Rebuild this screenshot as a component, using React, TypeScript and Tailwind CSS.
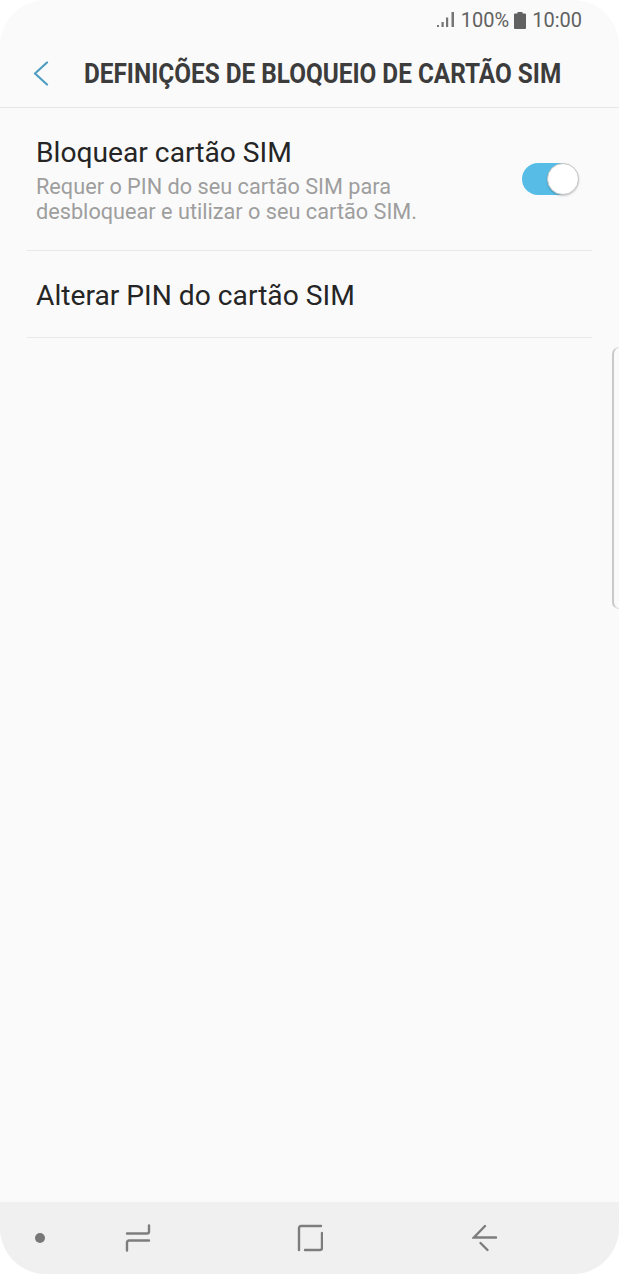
function SignalIcon() {
  return (
    <svg width="19" height="16" viewBox="0 0 19 16" fill="#757575">
      <rect x="0" y="13" width="2" height="2" />
      <rect x="4.500" y="10" width="2.200" height="5" />
      <rect x="9" y="5.500" width="2.200" height="9.500" />
      <rect x="14.500" y="0" width="2.500" height="15" />
    </svg>
  )
}

function BatteryIcon() {
  return (
    <svg width="12" height="17" viewBox="0 0 12 17" fill="#616161">
      <path d="M3.500 0h5v1.500H11a1 1 0 0 1 1 1V16a1 1 0 0 1-1 1H1a1 1 0 0 1-1-1V2.500a1 1 0 0 1 1-1h2.500z" />
    </svg>
  )
}

function BackChevron() {
  return (
    <svg width="16" height="25" viewBox="0 0 16 25" fill="none" stroke="#4f9dc0" strokeWidth="2.200" strokeLinecap="round" strokeLinejoin="round">
      <path d="M14 1.500L2 12.500l12 11" />
    </svg>
  )
}

function RecentsIcon() {
  return (
    <svg width="26" height="28" viewBox="0 0 26 28" fill="none" stroke="#7d7d7d" strokeWidth="2.400" strokeLinecap="round">
      <path d="M24 1.500v6a2 2 0 0 1-2 2H2" />
      <path d="M24 16.500H4a2 2 0 0 0-2 2v8" />
    </svg>
  )
}

function HomeIcon() {
  return (
    <svg width="26" height="28" viewBox="0 0 26 28" fill="none" stroke="#7d7d7d" strokeWidth="2.400" strokeLinecap="round">
      <path d="M2 26V4a2 2 0 0 1 2-2h20" />
      <path d="M8 26h15a2 2 0 0 0 2-2V9" />
    </svg>
  )
}

function BackIcon() {
  return (
    <svg width="26" height="28" viewBox="0 0 26 28" fill="none" stroke="#7d7d7d" strokeWidth="2.400" strokeLinecap="round">
      <path d="M13 2L2 13.500h22" />
      <path d="M8.500 19l7 7" />
    </svg>
  )
}

export default function App() {
  return (
    <div className="w-[619px] h-[1274px] bg-white overflow-hidden" style={{ fontFamily: 'Roboto, sans-serif' }}>
      <div className="relative w-full h-full bg-[#fafafa] rounded-[46px] overflow-hidden flex flex-col">
        {/* Status bar */}
        <div className="h-[40px] flex items-center justify-end gap-[5px] pr-[37px] text-[#616161] text-[20px]">
          <SignalIcon />
          <span>100%</span>
          <BatteryIcon />
          <span className="ml-[1px]">10:00</span>
        </div>

        {/* Header */}
        <div className="h-[68px] flex items-center border-b border-[#e6e6e6]">
          <div className="ml-[33px] flex"><BackChevron /></div>
          <h1 className="ml-[35px] whitespace-nowrap origin-left scale-x-[0.869] text-[28px] font-bold text-[#3c3c3c]">
            DEFINIÇÕES DE BLOQUEIO DE CARTÃO SIM
          </h1>
        </div>

        {/* Settings list */}
        <div className="px-[27px]">
          <div className="h-[143px] flex items-center justify-between border-b border-[#e8e8e8] pl-[9px] pr-[13px]">
            <div className="pt-[2px]">
              <p className="text-[28.200px] leading-[34px] text-[#252525]">Bloquear cartão SIM</p>
              <p className="text-[21.700px] leading-[25px] mt-[4px] text-[#9e9e9e]">
                Requer o PIN do seu cartão SIM para
                <br />
                desbloquear e utilizar o seu cartão SIM.
              </p>
            </div>
            <div className="relative w-[57px] h-[32px] -mt-[1px]">
              <div className="absolute left-0 top-0 w-[54px] h-[32px] rounded-full bg-[#57bde6]" />
              <div className="absolute right-0 top-0 w-[32px] h-[32px] rounded-full bg-white border border-[#c4c4c4] shadow-[0_1px_2px_rgba(0,0,0,0.2)]" />
            </div>
          </div>
          <div className="h-[87px] flex items-center border-b border-[#e8e8e8] pl-[9px] pt-[5px]">
            <p className="text-[28.200px] text-[#252525]">Alterar PIN do cartão SIM</p>
          </div>
        </div>

        {/* Edge panel handle */}
        <div className="absolute right-0 top-[347px] w-[7px] h-[262px] rounded-l-[8px] border-l-2 border-y border-[#c9c9c9] border-y-[#dedede]" />

        {/* Nav bar */}
        <div className="mt-auto h-[72px] bg-[#f0f0f0] flex items-center">
          <div className="w-[10px] h-[10px] rounded-full bg-[#787878] ml-[35px]" />
          <div className="ml-[80px] flex"><RecentsIcon /></div>
          <div className="ml-[146px] flex"><HomeIcon /></div>
          <div className="ml-[149px] flex"><BackIcon /></div>
        </div>
      </div>
    </div>
  )
}
